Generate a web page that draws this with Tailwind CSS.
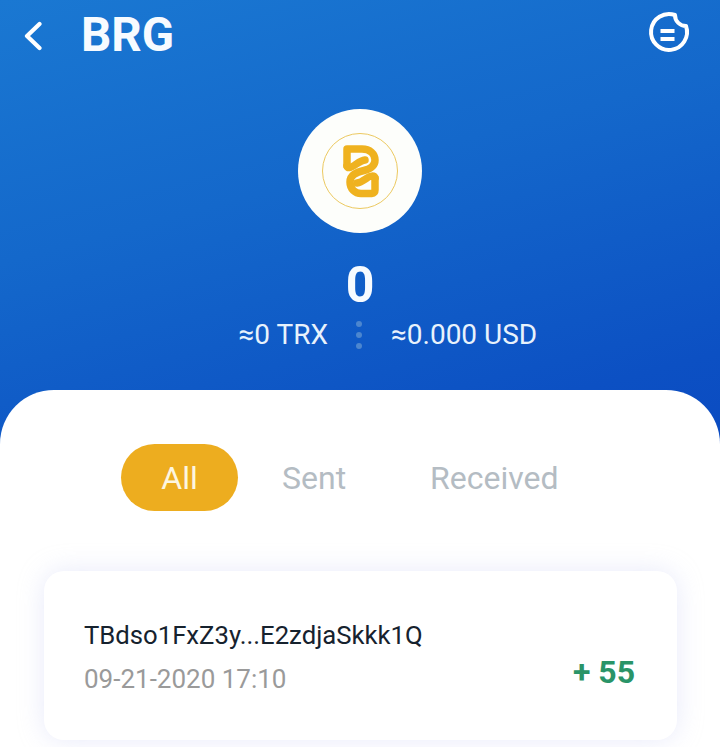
<!DOCTYPE html>
<html lang="en">
<head>
<meta charset="utf-8">
<title>BRG</title>
<script src="https://cdn.jsdelivr.net/npm/@tailwindcss/browser@4"></script>
</head>
<body class="m-0">
<div class="w-[720px] h-[747px] overflow-hidden flex flex-col font-['Roboto',sans-serif] bg-[linear-gradient(165deg,#1a78d2_0%,#1468cb_28%,#0c50c3_58%,#073abc_100%)]">
  <!-- Top bar -->
  <header class="h-[72px] flex items-center pl-[24px] pr-[26px] shrink-0">
    <svg class="w-[18px] h-[30px] mr-[39px]" viewBox="0 0 18 30" fill="none" stroke="#ffffff" stroke-width="4.2" stroke-linecap="round" stroke-linejoin="round"><path d="M15.5 3 3 15l12.5 12"/></svg>
    <h1 class="text-[47.5px] leading-none font-bold text-[#f7fbff]">BRG</h1>
    <svg class="ml-auto -mt-[6px] w-[52px] h-[50px]" viewBox="0 0 52 50" fill="none" stroke="#ffffff" stroke-linejoin="round">
      <path stroke-width="4" d="M33 7A18 18 0 1 0 44 18C38 18 33 13.500 33 7Z"/>
      <path stroke-width="4" d="M18.500 23h14M18.500 31h14"/>
    </svg>
  </header>

  <!-- Token summary -->
  <section class="flex flex-col items-center pt-[37px] shrink-0">
    <div class="w-[124px] h-[124px] rounded-full bg-[#fdfefb] flex items-center justify-center">
      <div class="w-[76px] h-[76px] rounded-full border-[1.5px] border-[#ecc960] flex items-center justify-center">
        <svg class="w-[46px] h-[62px]" viewBox="0 0 46 62" fill="none" stroke="#efb21f" stroke-width="7.5" stroke-linejoin="round" stroke-linecap="round">
          <path d="M10 26V9H25C33 9 38 14 38 20C38 26 33 29 27 30.500C19 32.500 13 35 13 42C13 49 18 53.500 24 53.500H35C37 53.500 38 52 38 50V38"/>
          <path d="M10 26C11 29 15 27 18 25C21 23 24 20.500 28 20"/>
          <path d="M38 38C37 35 33 36 30 38C27 40 24 42.500 20 43"/>
        </svg>
      </div>
    </div>
    <div class="mt-[27px] text-[50px] leading-[50px] font-bold text-[#f7fbff]">0</div>
    <div class="mt-[9px] w-full flex items-center text-[28px] leading-[32px] text-[#e8f2fc]">
      <span class="w-[328px] text-right">≈0 TRX</span>
      <span class="w-[62px] flex flex-col items-center gap-[5px]">
        <i class="block w-[6px] h-[6px] rounded-full bg-[#4c86cf]"></i>
        <i class="block w-[6px] h-[6px] rounded-full bg-[#4c86cf]"></i>
        <i class="block w-[6px] h-[6px] rounded-full bg-[#4c86cf]"></i>
      </span>
      <span class="ml-px">≈0.000 USD</span>
    </div>
  </section>

  <!-- Transactions sheet -->
  <main class="mt-[39px] flex-1 bg-white rounded-t-[54px] px-[44px] pt-[54px]">
    <nav class="flex items-center pl-[77px] text-[32px] leading-none text-[#b4bcc3]">
      <button class="w-[117px] h-[67px] rounded-full bg-[#edad1f] text-[#fdf6e0]">All</button>
      <span class="ml-[44px]">Sent</span>
      <span class="ml-[84px]">Received</span>
    </nav>
    <article class="mt-[60px] w-[633px] h-[169px] rounded-[20px] bg-white shadow-[0_0_26px_rgba(190,195,240,0.35)] pl-[40px] pr-[42px] pt-[47px] flex justify-between">
      <div>
        <p class="text-[25.7px] leading-[34px] text-[#16222e]">TBdso1FxZ3y...E2zdjaSkkk1Q</p>
        <p class="mt-[10px] text-[26px] leading-[34px] text-[#9a9a9a]">09-21-2020 17:10</p>
      </div>
      <p class="self-start mt-[36px] text-[32px] leading-[36px] font-bold text-[#2a9468]">+ 55</p>
    </article>
  </main>
</div>
</body>
</html>
